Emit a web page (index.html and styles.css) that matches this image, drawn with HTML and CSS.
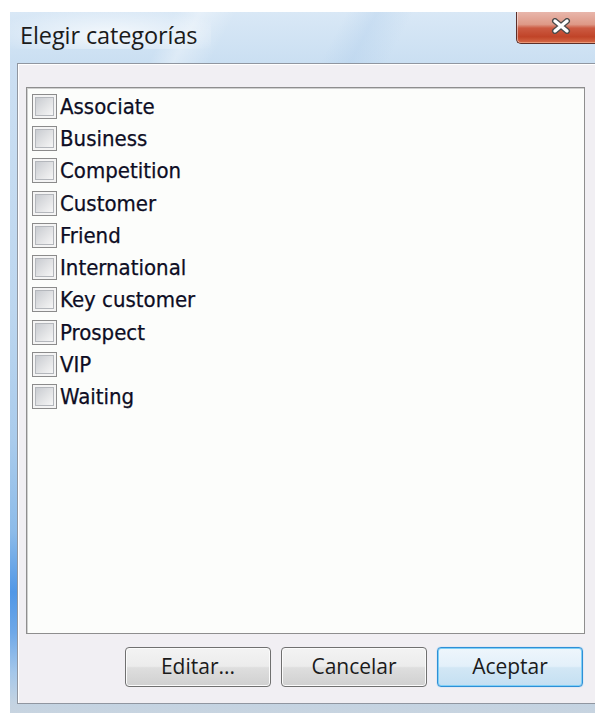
FILE: index.html
```html
<!DOCTYPE html>
<html lang="es">
<head>
<meta charset="utf-8">
<title>Elegir categorías</title>
<link rel="stylesheet" href="styles.css">
</head>
<body>
<div class="window">
  <div class="titlebar">
    <span class="title">Elegir categorías</span>
    <button class="close" aria-label="Cerrar">
      <svg width="20" height="16" viewBox="0 0 20 16">
        <path d="M4 3 L16 13 M16 3 L4 13" stroke="#4b4b4b" stroke-width="6" stroke-linecap="round" fill="none"/>
        <path d="M4 3 L16 13 M16 3 L4 13" stroke="#ffffff" stroke-width="3.4" stroke-linecap="round" fill="none"/>
      </svg>
    </button>
  </div>
  <div class="frame">
    <div class="client">
      <ul class="list">
        <li class="item"><span class="check"></span><span class="label">Associate</span></li>
        <li class="item"><span class="check"></span><span class="label">Business</span></li>
        <li class="item"><span class="check"></span><span class="label">Competition</span></li>
        <li class="item"><span class="check"></span><span class="label">Customer</span></li>
        <li class="item"><span class="check"></span><span class="label">Friend</span></li>
        <li class="item"><span class="check"></span><span class="label">International</span></li>
        <li class="item"><span class="check"></span><span class="label">Key customer</span></li>
        <li class="item"><span class="check"></span><span class="label">Prospect</span></li>
        <li class="item"><span class="check"></span><span class="label">VIP</span></li>
        <li class="item"><span class="check"></span><span class="label">Waiting</span></li>
      </ul>
      <div class="buttons">
        <button class="btn">Editar...</button>
        <button class="btn">Cancelar</button>
        <button class="btn default">Aceptar</button>
      </div>
    </div>
  </div>
</div>
</body>
</html>
```
FILE: styles.css
```css
html, body {
  margin: 0;
  padding: 0;
  overflow: hidden;
  background: #ffffff;
}

body {
  width: 595px;
  height: 713px;
}

.window {
  margin: 12px 0 0 10px;
  width: 585px;
  height: 701px;
  display: flex;
  flex-direction: column;
  background: linear-gradient(180deg,
    #cfe1f3 0px, #bcd6ef 300px, #a9cbec 430px, #8cbbe9 520px,
    #5197e6 580px, #6ea8e8 620px, #a4c7ea 660px, #c3d3e2 690px, #c8d4e0 701px);
}

/* glass title bar */
.titlebar {
  height: 51px;
  flex: none;
  display: flex;
  align-items: flex-start;
  background:
    linear-gradient(118deg, transparent 0 27%, rgba(255,255,255,0.35) 31%, transparent 37%,
      transparent 55%, rgba(175,205,235,0.35) 60%, transparent 66%),
    linear-gradient(180deg, #d9e8f6 0%, #cadff2 100%);
}

.title {
  padding: 9px 14px 0 10px;
  line-height: 28px;
  font-family: "Open Sans", "Liberation Sans", sans-serif;
  font-size: 23.5px;
  letter-spacing: -0.1px;
  color: #1b1b1b;
  background: radial-gradient(ellipse 60% 70% at 50% 60%, rgba(255,255,255,0.75), rgba(255,255,255,0) 100%);
}

.close {
  margin-left: auto;
  width: 79px;
  height: 32px;
  padding: 6px 0 0 34px;
  box-sizing: border-box;
  display: flex;
  align-items: flex-start;
  border: 1px solid #5d2f29;
  border-top: none;
  border-right: none;
  border-bottom-left-radius: 5px;
  background: linear-gradient(180deg, #e8b6ab 0%, #de9987 40%, #cc5a42 52%, #c04428 80%, #d66a48 100%);
  box-shadow: inset 1px 0 0 rgba(255,255,255,0.45), inset 0 -1px 0 rgba(255,200,170,0.5);
}

.frame {
  flex: 1;
  display: flex;
  padding: 0 0 9px 7px;
}

.client {
  flex: 1;
  display: flex;
  flex-direction: column;
  border: 1px solid #9096a0;
  border-right: none;
  background: #f1eff3;
  padding: 23px 0 15px 8px;
  box-shadow: inset 1px 1px 0 #ffffff;
}

.list {
  list-style: none;
  margin: 0;
  width: 559px;
  box-sizing: border-box;
  height: 547px;
  padding: 2px 0 0 5px;
  border: 1px solid #8e8e8e;
  box-shadow: inset 1px 1px 0 #d0d0d0;
  background: #fcfdfb;
  display: flex;
  flex-direction: column;
}

.item {
  height: 32.3px;
  flex: none;
  display: flex;
  align-items: center;
}

.check {
  width: 25px;
  height: 25px;
  box-sizing: border-box;
  border: 1px solid #8b8b8b;
  padding: 2px;
  background: #f4f4f4;
  display: flex;
}

.check::after {
  content: "";
  flex: 1;
  border: 1px solid #b4b7bc;
  background: linear-gradient(135deg, #c9ccd1 0%, #e2e3e5 55%, #f6f6f6 100%);
}

.label {
  margin-left: 3px;
  font-family: "DejaVu Sans Condensed", "DejaVu Sans", sans-serif;
  font-stretch: condensed;
  font-size: 22px;
  color: #0d0d24;
  -webkit-text-stroke: 0.25px #0d0d24;
}

.buttons {
  margin-top: 13px;
  width: 557px;
  display: flex;
  justify-content: flex-end;
  gap: 10px;
}

.btn {
  width: 146px;
  height: 40px;
  border: 1px solid #707070;
  border-radius: 4px;
  font-family: "Open Sans", "Liberation Sans", sans-serif;
  font-size: 21px;
  color: #1b1b1b;
  padding: 0 0 2px;
  background: linear-gradient(180deg, #f3f3f3 0%, #ececec 48%, #dedede 52%, #d0d0d0 100%);
  box-shadow: inset 0 0 0 1px #fbfbfb;
}

.btn.default {
  border-color: #2f8fd6;
  background: linear-gradient(180deg, #eef6fc 0%, #e3f0fa 48%, #d2e7f5 52%, #c4dff2 100%);
  box-shadow: inset 0 0 0 1px #7fd0f7, 0 0 1px #5cb8f0;
}
```
